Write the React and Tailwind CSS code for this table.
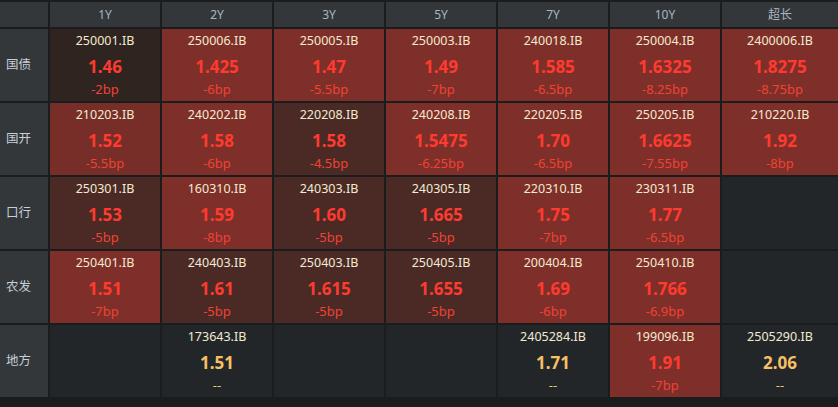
import React from "react";

const cols = ["1Y", "2Y", "3Y", "5Y", "7Y", "10Y", "超长"];

const R = "bg-[#7f2f29]";
const D = "bg-[#4b2a26]";
const DD = "bg-[#2f2420]";
const E = "bg-[#222629]";

const rows = [
  {
    label: "国债",
    cells: [
      { bg: DD, code: "250001.IB", y: "1.46", bp: "-2bp" },
      { bg: R, code: "250006.IB", y: "1.425", bp: "-6bp" },
      { bg: R, code: "250005.IB", y: "1.47", bp: "-5.5bp" },
      { bg: R, code: "250003.IB", y: "1.49", bp: "-7bp" },
      { bg: R, code: "240018.IB", y: "1.585", bp: "-6.5bp" },
      { bg: R, code: "250004.IB", y: "1.6325", bp: "-8.25bp" },
      { bg: R, code: "2400006.IB", y: "1.8275", bp: "-8.75bp" },
    ],
  },
  {
    label: "国开",
    cells: [
      { bg: "bg-[#772e28]", code: "210203.IB", y: "1.52", bp: "-5.5bp" },
      { bg: R, code: "240202.IB", y: "1.58", bp: "-6bp" },
      { bg: D, code: "220208.IB", y: "1.58", bp: "-4.5bp" },
      { bg: R, code: "240208.IB", y: "1.5475", bp: "-6.25bp" },
      { bg: R, code: "220205.IB", y: "1.70", bp: "-6.5bp" },
      { bg: R, code: "250205.IB", y: "1.6625", bp: "-7.55bp" },
      { bg: R, code: "210220.IB", y: "1.92", bp: "-8bp" },
    ],
  },
  {
    label: "口行",
    cells: [
      { bg: D, code: "250301.IB", y: "1.53", bp: "-5bp" },
      { bg: R, code: "160310.IB", y: "1.59", bp: "-8bp" },
      { bg: D, code: "240303.IB", y: "1.60", bp: "-5bp" },
      { bg: D, code: "240305.IB", y: "1.665", bp: "-5bp" },
      { bg: R, code: "220310.IB", y: "1.75", bp: "-7bp" },
      { bg: R, code: "230311.IB", y: "1.77", bp: "-6.5bp" },
      { bg: E },
    ],
  },
  {
    label: "农发",
    cells: [
      { bg: R, code: "250401.IB", y: "1.51", bp: "-7bp" },
      { bg: D, code: "240403.IB", y: "1.61", bp: "-5bp" },
      { bg: D, code: "250403.IB", y: "1.615", bp: "-5bp" },
      { bg: D, code: "250405.IB", y: "1.655", bp: "-5bp" },
      { bg: R, code: "200404.IB", y: "1.69", bp: "-6bp" },
      { bg: R, code: "250410.IB", y: "1.766", bp: "-6.9bp" },
      { bg: E },
    ],
  },
  {
    label: "地方",
    cells: [
      { bg: E },
      { bg: E, code: "173643.IB", y: "1.51", bp: "--", flat: true },
      { bg: E },
      { bg: E },
      { bg: E, code: "2405284.IB", y: "1.71", bp: "--", flat: true },
      { bg: R, code: "199096.IB", y: "1.91", bp: "-7bp" },
      { bg: E, code: "2505290.IB", y: "2.06", bp: "--", flat: true },
    ],
  },
];

function Cell({ c }) {
  return (
    <div className={`${c.bg} flex flex-col items-center`}>
      {c.code && (
        <>
          <div className="mt-[4px] h-[16px] leading-[16px] text-[12.5px] text-[#f3ead2]">
            {c.code}
          </div>
          <div
            className={`mt-[7px] h-[22px] leading-[22px] text-[17px] font-bold ${
              c.flat ? "text-[#f7c066]" : "text-[#ff3a2f]"
            }`}
          >
            {c.y}
          </div>
          <div
            className={`mt-[3px] h-[16px] leading-[16px] text-[13px] ${
              c.flat ? "text-[#f7c066]" : "text-[#ef4234]"
            }`}
          >
            {c.bp}
          </div>
        </>
      )}
    </div>
  );
}

export default function App() {
  return (
    <div
      className="w-[838px] h-[407px] bg-[#1b1c1e] pt-[2px] overflow-hidden"
      style={{ fontFamily: '"Noto Sans", "Noto Sans CJK SC", sans-serif' }}
    >
      <div className="grid grid-cols-[48px_repeat(6,110px)_1fr] grid-rows-[25px_repeat(5,72px)] gap-[2px]">
        <div className="bg-[#33373a]" />
        {cols.map((c) => (
          <div
            key={c}
            className="bg-[#33373a] flex items-center justify-center text-[12px] text-[#a9b6c2]"
          >
            {c}
          </div>
        ))}
        {rows.map((r) => (
          <React.Fragment key={r.label}>
            <div className="bg-[#33373a] flex items-center pl-[6px] text-[12.5px] text-[#c5cfd8]">
              {r.label}
            </div>
            {r.cells.map((c, i) => (
              <Cell key={i} c={c} />
            ))}
          </React.Fragment>
        ))}
      </div>
    </div>
  );
}
